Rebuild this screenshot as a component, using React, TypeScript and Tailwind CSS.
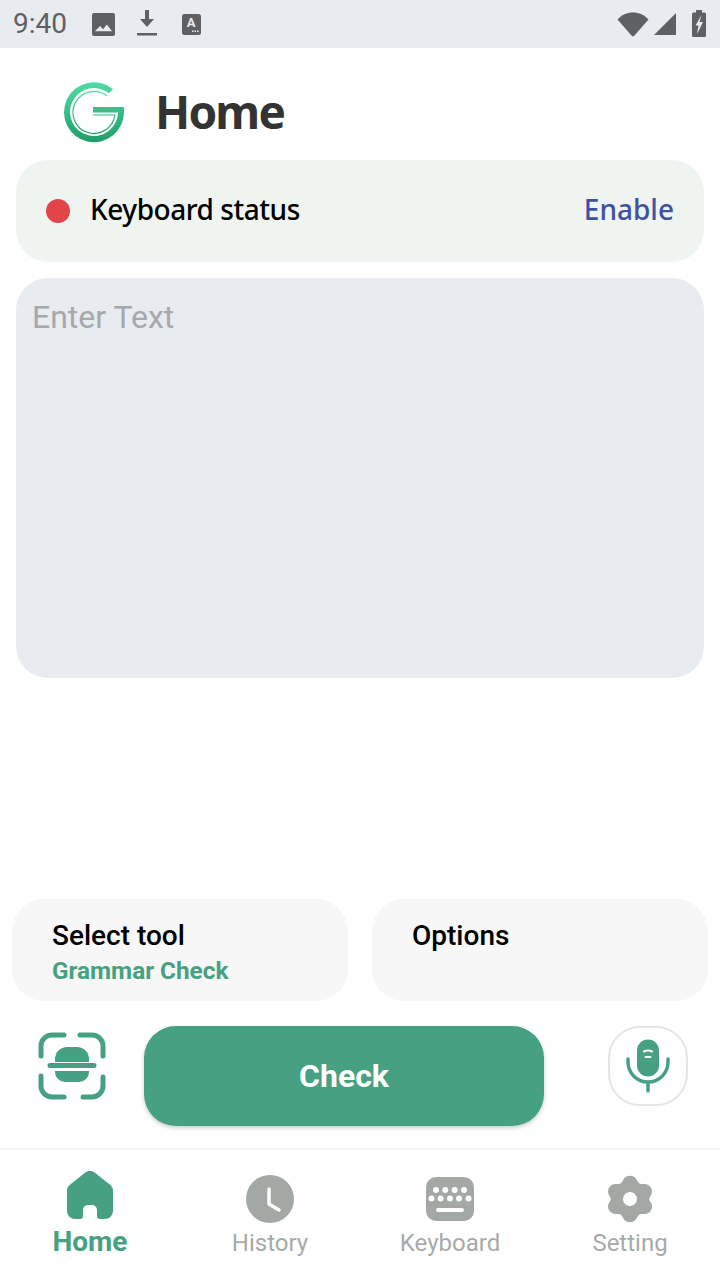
const roboto = { fontFamily: "Roboto, sans-serif" };

function StatusBar() {
  return (
    <div className="flex h-12 items-center justify-between bg-[#e8ebf0] pl-[13px] pr-[14px] text-[#5f6063]">
      <div className="flex items-center">
        <span className="w-[55px] text-[28px] leading-none font-['Roboto',sans-serif]">9:40</span>
        <svg className="ml-[24px]" width="23" height="23" viewBox="0 0 24 24" fill="currentColor">
          <path fillRule="evenodd" d="M2 0h20a2 2 0 0 1 2 2v20a2 2 0 0 1-2 2H2a2 2 0 0 1-2-2V2a2 2 0 0 1 2-2zM3 19h18l-5.500-7-4 5-3-3.500z" />
        </svg>
        <svg className="ml-[21px]" width="22" height="28" viewBox="0 0 22 28" fill="currentColor">
          <path d="M9 0h4v9h5l-7 8-7-8h5zM1 23h20v2.500H1z" />
        </svg>
        <svg className="ml-[24px]" width="19" height="21" viewBox="0 0 19 21">
          <rect width="19" height="21" rx="2.500" fill="currentColor" />
          <text x="9" y="13" textAnchor="middle" fontSize="13" fontWeight="700" fill="#e8ebf0" fontFamily="Roboto, sans-serif">A</text>
          <path d="M10 16.500h1.500V18H10zM12.500 16.500H14V18h-1.500zM15 16.500h1.500V18H15z" fill="#e8ebf0" />
        </svg>
      </div>
      <div className="flex items-center">
        <svg width="32" height="25" viewBox="0 0 32 25" fill="currentColor">
          <path d="M0.500 7.500C4.500 3 10 0.500 16 0.500S27.500 3 31.500 7.500L17.500 23.500a2 2 0 0 1-3 0z" />
        </svg>
        <svg className="ml-[5px]" width="22" height="22" viewBox="0 0 22 22" fill="currentColor">
          <path d="M22 0v22H0z" />
        </svg>
        <svg className="mb-[2px] ml-[16px]" width="14" height="27" viewBox="0 0 14 27">
          <path d="M4 0h6v2.500h2.500A1.500 1.500 0 0 1 14 4v21.500a1.500 1.500 0 0 1-1.500 1.500h-11A1.500 1.500 0 0 1 0 25.500V4a1.500 1.500 0 0 1 1.500-1.500H4z" fill="currentColor" />
          <path d="M9.500 5L3.500 15.500h3L5 24l6-12H7.500z" fill="#e8ebf0" />
        </svg>
      </div>
    </div>
  );
}

function Logo() {
  return (
    <svg width="62" height="62" viewBox="0 0 62 62" fill="none">
      <defs>
        <linearGradient id="logoGrad" x1="0" y1="0" x2="0" y2="1">
          <stop offset="0" stopColor="#4fdca6" />
          <stop offset="1" stopColor="#1f9e68" />
        </linearGradient>
      </defs>
      <path
        fill="url(#logoGrad)"
        d="M50 8A30 30 0 1 0 61 31V26H30V31.500H55A24 24 0 1 1 46 12.300z"
      />
      <path
        stroke="url(#logoGrad)"
        strokeWidth="1.200"
        d="M44 15A21 21 0 1 0 51.800 34H30"
      />
    </svg>
  );
}

function ScanIcon() {
  return (
    <svg width="68" height="68" viewBox="0 0 68 68" fill="#46a182">
      <g fill="none" stroke="#46a182" strokeWidth="5" strokeLinecap="round">
        <path d="M3 24V14A11 11 0 0 1 14 3h12" />
        <path d="M42 3h12a11 11 0 0 1 11 11v10" />
        <path d="M3 44v10a11 11 0 0 0 11 11h12" />
        <path d="M45 65h9a11 11 0 0 0 11-11V45" />
        <path d="M12 33.500h44" />
      </g>
      <path d="M17 30v-3a12 12 0 0 1 12-12h10a12 12 0 0 1 12 12v3z" />
      <path d="M17 39h34v1a10 10 0 0 1-10 10H27a10 10 0 0 1-10-10z" />
    </svg>
  );
}

function MicIcon() {
  return (
    <svg width="44" height="54" viewBox="0 0 44 54">
      <rect x="11" y="0.500" width="22" height="37" rx="11" fill="#46a182" />
      <path d="M18 12.500q4-2 8 0M19.500 18h5" stroke="#fff" strokeWidth="2" strokeLinecap="round" fill="none" />
      <path d="M2 20v3a20 20 0 0 0 40 0v-3M22 43v9" stroke="#46a182" strokeWidth="3.500" strokeLinecap="round" fill="none" />
    </svg>
  );
}

function HomeIcon() {
  return (
    <svg width="46" height="48" viewBox="0 0 46 48" fill="#46a182">
      <path d="M18 1.800a8 8 0 0 1 10 0l14.500 11.500A8 8 0 0 1 46 19.500V40a8 8 0 0 1-8 8h-5a3 3 0 0 1-3-3v-6a5 5 0 0 0-5-5h-4a5 5 0 0 0-5 5v6a3 3 0 0 1-3 3H8a8 8 0 0 1-8-8V19.500a8 8 0 0 1 3.500-6.200z" />
    </svg>
  );
}

function ClockIcon() {
  return (
    <svg width="48" height="48" viewBox="0 0 48 48">
      <circle cx="24" cy="24" r="24" fill="#a3a8a4" />
      <path d="M23 14v15l10 6" stroke="#fff" strokeWidth="3.500" strokeLinecap="round" strokeLinejoin="round" fill="none" />
    </svg>
  );
}

function KeyboardIcon() {
  const top = [10, 19.300, 28.600, 38];
  const mid = [5.500, 14.600, 24, 33, 42.500];
  return (
    <svg width="48" height="44" viewBox="0 0 48 44">
      <rect width="48" height="44" rx="10" fill="#a3a8a4" />
      {top.map((x) => (
        <circle key={x} cx={x} cy="13" r="3" fill="#fff" />
      ))}
      {mid.map((x) => (
        <circle key={x} cx={x} cy="21.500" r="3" fill="#fff" />
      ))}
      <rect x="10" y="31" width="28" height="4" rx="2" fill="#fff" />
    </svg>
  );
}

function GearIcon() {
  return (
    <svg width="46" height="48" viewBox="0 0 46 48" fill="#a3a8a4">
      <path
        fillRule="evenodd"
        d="M16.500 4.500a7.500 7.500 0 0 1 13 0l1.500 2.600a4 4 0 0 0 3.500 2h3a7.500 7.500 0 0 1 6.500 11.200l-1.200 2a3.500 3.500 0 0 0 0 3.500l1.200 2a7.500 7.500 0 0 1-6.500 11.300h-3a4 4 0 0 0-3.500 2l-1.500 2.400a7.500 7.500 0 0 1-13 0L15 41a4 4 0 0 0-3.500-2h-3A7.500 7.500 0 0 1 2 27.800l1.200-2a3.500 3.500 0 0 0 0-3.500L2 20.300A7.500 7.500 0 0 1 8.500 9.100h3a4 4 0 0 0 3.500-2zM23 17a7 7 0 1 0 0 14 7 7 0 0 0 0-14z"
      />
    </svg>
  );
}

const tabs = [
  { label: "Home", icon: <HomeIcon />, active: true },
  { label: "History", icon: <ClockIcon />, active: false },
  { label: "Keyboard", icon: <KeyboardIcon />, active: false },
  { label: "Setting", icon: <GearIcon />, active: false },
];

export default function App() {
  return (
    <div className="flex h-[1280px] w-[720px] flex-col overflow-hidden bg-white">
      <StatusBar />

      <header className="flex h-[112px] items-center pl-[63px] pt-4">
        <Logo />
        <h1 className="mb-[2px] ml-[30px] text-[46px] font-bold tracking-[-1.8px] text-[#333333] font-['Noto_Sans',sans-serif]">Home</h1>
      </header>

      <div className="mx-4 flex h-[102px] items-center rounded-[32px] bg-[#eff4f1] px-[30px] pb-1">
        <span className="mt-1 h-6 w-6 rounded-full bg-[#e14547]" />
        <span className="ml-[20px] text-[28px] font-medium tracking-[-0.45px] text-black font-['Noto_Sans',sans-serif]">Keyboard status</span>
        <span className="ml-auto text-[28px] font-medium text-[#3f51a3] font-['Noto_Sans',sans-serif]">Enable</span>
      </div>

      <div className="mx-4 mt-4 h-[400px] rounded-[32px] bg-[#e8ebf0] px-4 pt-[19px]">
        <p className="text-[32px] leading-10 text-[#a6a8ac] font-['Roboto',sans-serif]">Enter Text</p>
      </div>

      <div className="mt-auto flex gap-6 px-3" style={roboto}>
        <div className="h-[102px] flex-1 rounded-[32px] bg-[#f7f7f7] pl-10 pt-[19px]">
          <p className="text-[28px] leading-[35px] font-medium text-black">Select tool</p>
          <p className="text-[24.3px] leading-9 font-bold text-[#46a182]">Grammar Check</p>
        </div>
        <div className="h-[102px] flex-1 rounded-[32px] bg-[#f7f7f7] pl-10 pt-[19px]">
          <p className="text-[28px] leading-[35px] font-medium text-black">Options</p>
        </div>
      </div>

      <div className="mt-[25px] flex h-[100px] items-start" style={roboto}>
        <div className="ml-[38px] mt-[6px] flex w-[68px] justify-center">
          <ScanIcon />
        </div>
        <button className="ml-[38px] h-[100px] w-[400px] rounded-[32px] bg-[#46a182] text-[32px] font-bold text-white shadow-[0_2px_4px_rgba(0,0,0,0.2)]">
          Check
        </button>
        <div className="ml-[64px] flex h-20 w-20 items-center justify-center rounded-[32px] border-2 border-[#e6e6e6] bg-white">
          <MicIcon />
        </div>
      </div>

      <nav className="mt-[22px] grid h-[132px] grid-cols-4 border-t-2 border-[#f4f4f4]" style={roboto}>
        {tabs.map((tab) => (
          <div key={tab.label} className={tab.active ? "flex flex-col items-center pt-[19px]" : "flex flex-col items-center pt-[23px]"}>
            <div className="flex h-[52px] items-center justify-center">{tab.icon}</div>
            <span
              className={
                tab.active
                  ? "mt-[3px] text-[28px] leading-9 font-bold text-[#46a182]"
                  : "text-[24px] leading-9 text-[#a7aaa8]"
              }
            >
              {tab.label}
            </span>
          </div>
        ))}
      </nav>
    </div>
  );
}
